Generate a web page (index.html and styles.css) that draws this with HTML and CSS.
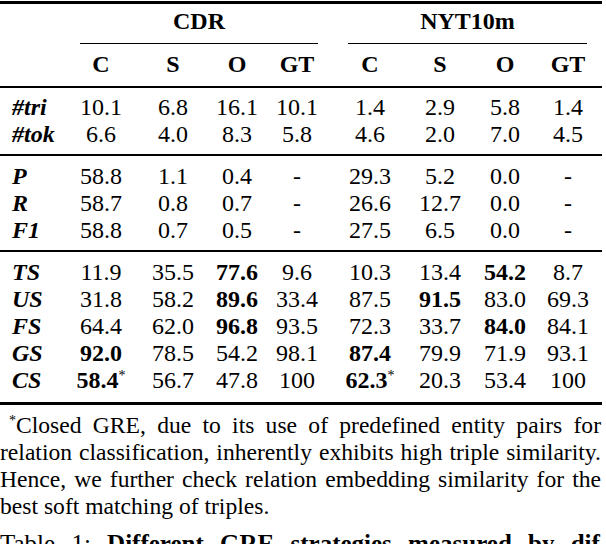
FILE: index.html
```html
<!DOCTYPE html>
<html>
<head>
<meta charset="utf-8">
<link rel="stylesheet" href="styles.css">
</head>
<body>
<div class="page">
  <table class="res">
    <colgroup>
      <col class="c-lab">
      <col class="c1"><col class="c2"><col class="c3"><col class="c4">
      <col class="c-sp">
      <col class="c5"><col class="c6"><col class="c7"><col class="c8">
    </colgroup>
    <thead>
      <tr class="grp">
        <th></th>
        <th colspan="4"><div class="cmid cdr">CDR</div></th>
        <th></th>
        <th colspan="4"><div class="cmid nyt">NYT10m</div></th>
      </tr>
      <tr class="sub">
        <th></th>
        <th>C</th><th>S</th><th>O</th><th>GT</th>
        <th></th>
        <th>C</th><th>S</th><th>O</th><th>GT</th>
      </tr>
    </thead>
    <tbody>
      <tr class="first"><td class="lab">#tri</td><td>10.1</td><td>6.8</td><td>16.1</td><td>10.1</td><td></td><td>1.4</td><td>2.9</td><td>5.8</td><td>1.4</td></tr>
      <tr class="last"><td class="lab">#tok</td><td>6.6</td><td>4.0</td><td>8.3</td><td>5.8</td><td></td><td>4.6</td><td>2.0</td><td>7.0</td><td>4.5</td></tr>
    </tbody>
    <tbody class="ruled">
      <tr class="first"><td class="lab">P</td><td>58.8</td><td>1.1</td><td>0.4</td><td>-</td><td></td><td>29.3</td><td>5.2</td><td>0.0</td><td>-</td></tr>
      <tr><td class="lab">R</td><td>58.7</td><td>0.8</td><td>0.7</td><td>-</td><td></td><td>26.6</td><td>12.7</td><td>0.0</td><td>-</td></tr>
      <tr class="last"><td class="lab">F1</td><td>58.8</td><td>0.7</td><td>0.5</td><td>-</td><td></td><td>27.5</td><td>6.5</td><td>0.0</td><td>-</td></tr>
    </tbody>
    <tbody class="ruled">
      <tr class="first"><td class="lab">TS</td><td>11.9</td><td>35.5</td><td><b>77.6</b></td><td>9.6</td><td></td><td>10.3</td><td>13.4</td><td><b>54.2</b></td><td>8.7</td></tr>
      <tr><td class="lab">US</td><td>31.8</td><td>58.2</td><td><b>89.6</b></td><td>33.4</td><td></td><td>87.5</td><td><b>91.5</b></td><td>83.0</td><td>69.3</td></tr>
      <tr><td class="lab">FS</td><td>64.4</td><td>62.0</td><td><b>96.8</b></td><td>93.5</td><td></td><td>72.3</td><td>33.7</td><td><b>84.0</b></td><td>84.1</td></tr>
      <tr><td class="lab">GS</td><td><b>92.0</b></td><td>78.5</td><td>54.2</td><td>98.1</td><td></td><td><b>87.4</b></td><td>79.9</td><td>71.9</td><td>93.1</td></tr>
      <tr class="last end"><td class="lab">CS</td><td><b>58.4</b><sup>*</sup></td><td>56.7</td><td>47.8</td><td>100</td><td></td><td><b>62.3</b><sup>*</sup></td><td>20.3</td><td>53.4</td><td>100</td></tr>
    </tbody>
  </table>
  <p class="note"><sup>*</sup>Closed GRE, due to its use of predefined entity pairs for relation classification, inherently exhibits high triple similarity. Hence, we further check relation embedding similarity for the best soft matching of triples.</p>
  <p class="caption">Table 1: <b>Different GRE strategies measured by dif</b></p>
</div>
</body>
</html>
```

FILE: styles.css
```css
html, body {
  margin: 0;
  padding: 0;
  background: #fff;
  overflow: hidden;
}
body {
  width: 606px;
  height: 544px;
  font-family: "Liberation Serif", "Times New Roman", serif;
  font-size: 24px;
  color: #000;
}
.page {
  width: 601px;
  padding-top: 1px;
}
.res {
  width: 602px;
  table-layout: fixed;
  border-collapse: separate;
  border-spacing: 0;
  border-top: 3px solid #000;
  border-bottom: 3px solid #000;
  font-size: 24px;
}
.c-lab { width: 66px; }
.c1 { width: 70px; }
.c2 { width: 74px; }
.c3 { width: 54px; }
.c4 { width: 66px; }
.c-sp { width: 6px; }
.c5 { width: 68px; }
.c6 { width: 72px; }
.c7 { width: 58px; }
.c8 { width: 68px; }

.res th, .res td {
  padding: 0;
  line-height: 27px;
  text-align: center;
  white-space: nowrap;
  font-weight: normal;
}
.res th { font-weight: bold; }
.grp th { padding-top: 4px; vertical-align: top; }
.cmid {
  padding-bottom: 8px;
  border-bottom: 1px solid #000;
}
.cmid.cdr { margin: 0 12px 0 14px; }
.cmid.nyt { margin: 0 15px 0 12px; }
.sub th {
  padding-top: 7px;
  padding-bottom: 8px;
  border-bottom: 2px solid #000;
}
.res td.lab {
  text-align: left;
  padding-left: 12px;
  font-weight: bold;
  font-style: italic;
}
.first td { padding-top: 6px; }
.last td { padding-bottom: 6px; }
.ruled .first td { padding-top: 7px; border-top: 2px solid #000; }
.end td { padding-bottom: 8px; }
.res b { font-weight: bold; }
.res sup {
  font-size: 14px;
  line-height: 0;
  vertical-align: 8px;
  font-weight: normal;
}
.note {
  margin: 7px 0 0 0;
  font-size: 23.6px;
  line-height: 27px;
  text-align: justify;
  text-indent: 9px;
}
.note sup {
  font-size: 14px;
  line-height: 0;
  vertical-align: 8px;
}
.caption {
  margin: 10px 0 0 0;
  font-size: 25px;
  line-height: 27px;
  word-spacing: 10px;
  white-space: nowrap;
}
```
